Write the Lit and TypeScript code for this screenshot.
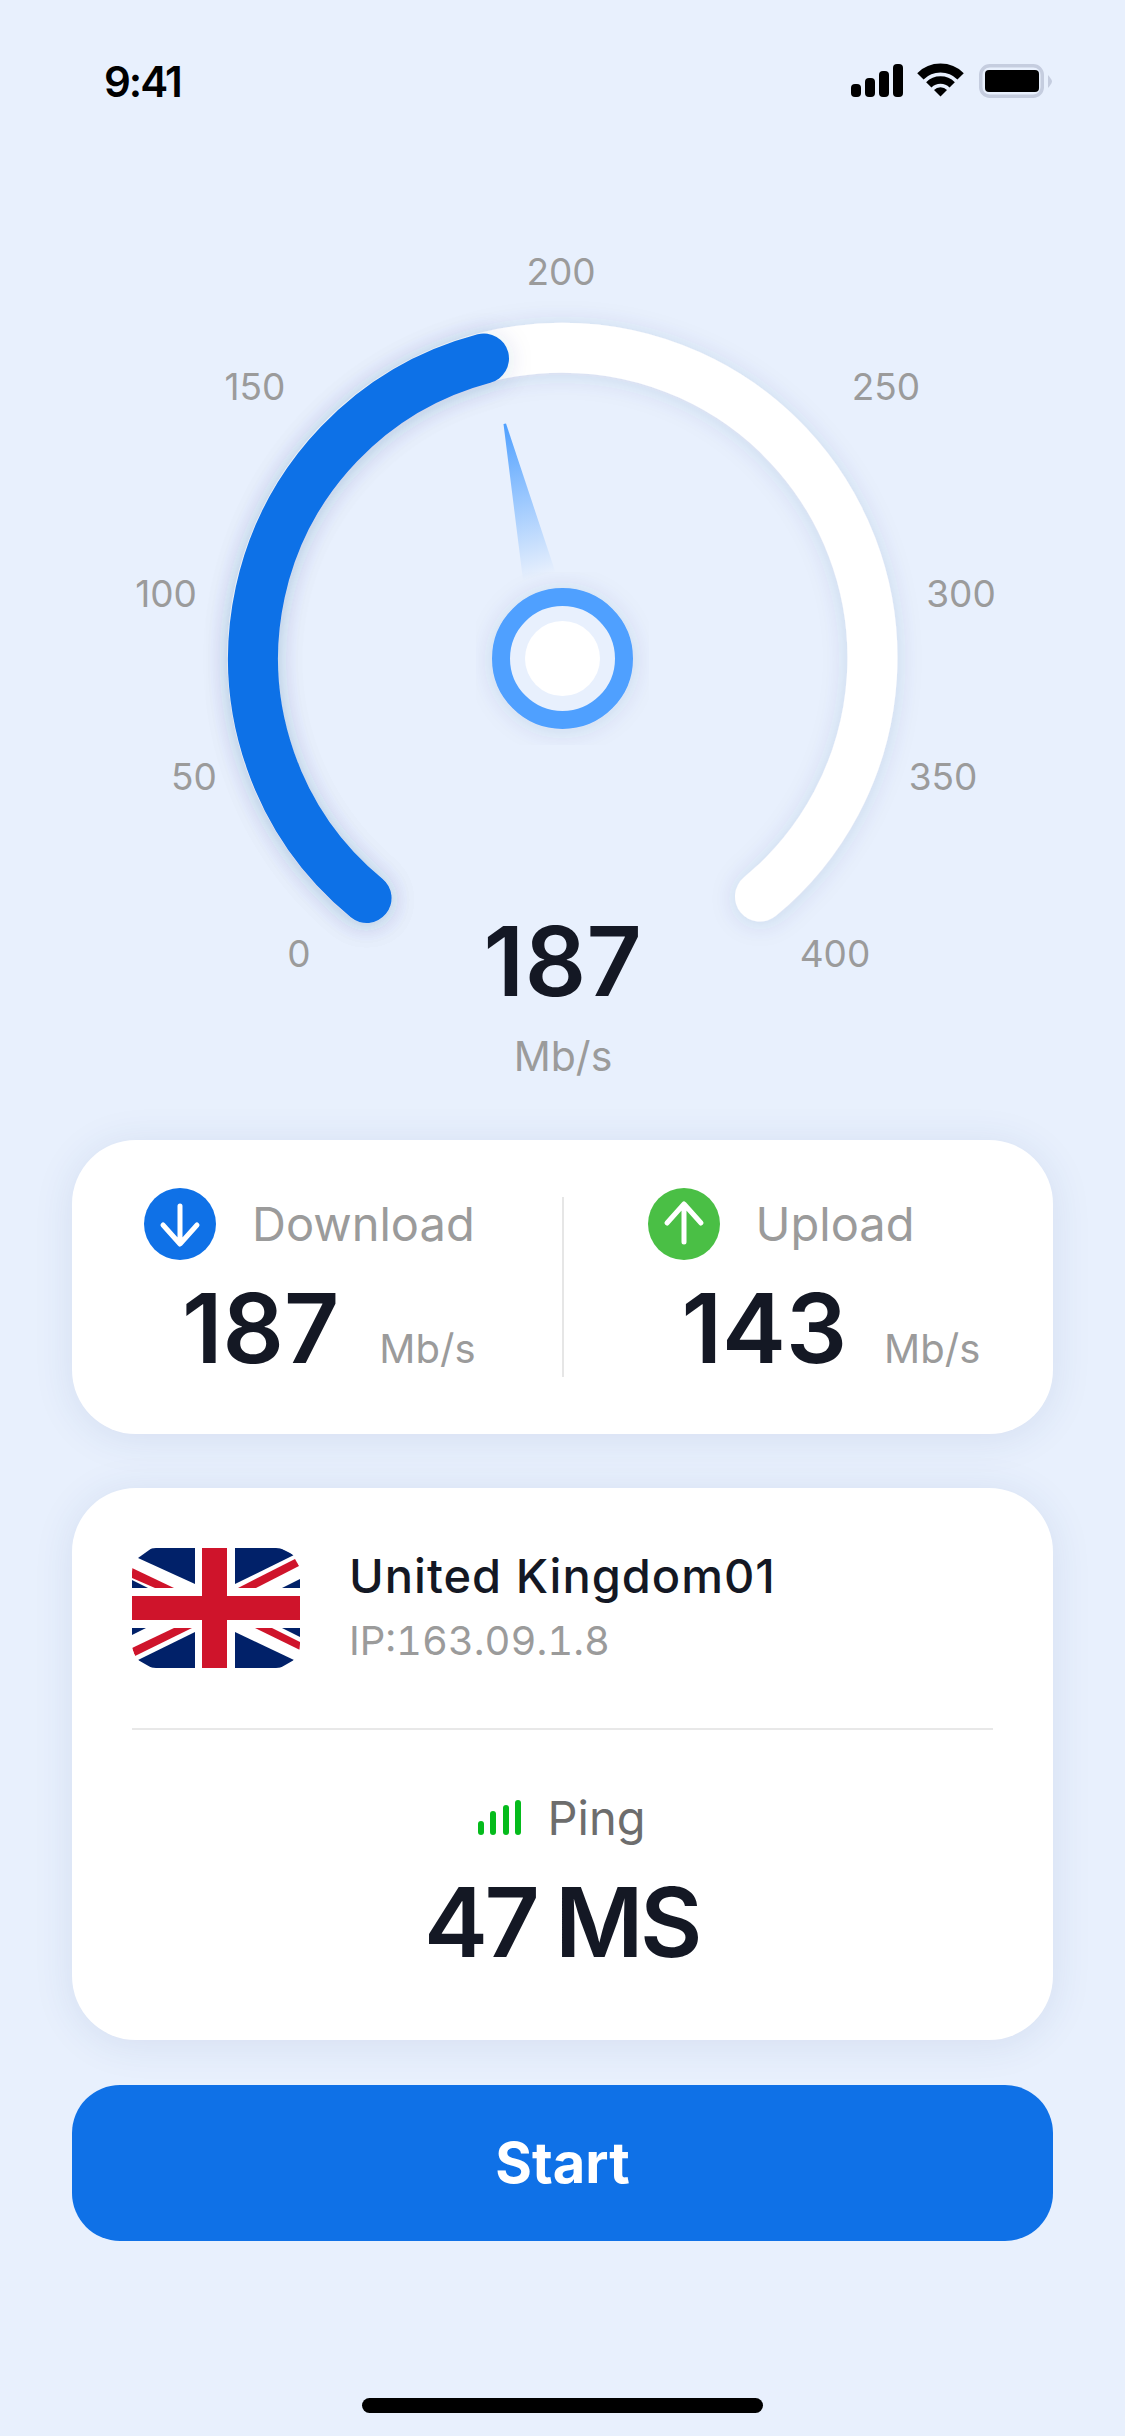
import { LitElement, html, css, svg } from "lit";
import { customElement } from "lit/decorators.js";

const LABELS: [string, number, number][] = [
  ["200", 561, 285], ["150", 255, 400], ["250", 886, 400], ["100", 166, 607], ["300", 961, 607],
  ["50", 194, 790], ["350", 943, 790], ["0", 299, 967], ["400", 835, 967],
];

@customElement("app-root")
export class AppRoot extends LitElement {
  static styles = css`
    :host {
      display: block;
      width: 1125px;
      height: 2436px;
      background: #e8f0fd;
      font-family: Inter, "Liberation Sans", sans-serif;
      color: #141824;
      overflow: hidden;
    }
    .page { display: flex; flex-direction: column; height: 2436px; }
    .status {
      height: 100px;
      flex: none;
      display: flex;
      justify-content: space-between;
      align-items: flex-start;
      padding: 57px 73px 0 104px;
      box-sizing: border-box;
    }
    .time { font-size: 42px; line-height: 50px; font-weight: 600; letter-spacing: -2px; color: #000; }
    .status-icons { display: flex; align-items: flex-start; margin-top: 7px; }
    .status-icons svg { display: block; }
    .gauge { display: block; flex: none; width: 1125px; height: 860px; margin-top: 140px; }
    .g-label { font-size: 37px; fill: #9b9b9b; text-anchor: middle; font-family: Inter, sans-serif; }
    .g-value { font-size: 96px; font-weight: 600; fill: #141824; text-anchor: middle; font-family: Inter, sans-serif; letter-spacing: 0.5px; }
    .g-unit { font-size: 41px; fill: #9b9b9b; text-anchor: middle; font-family: Inter, sans-serif; }
    .cards { display: flex; flex-direction: column; padding: 0 72px; margin-top: 40px; }
    .card { background: #fff; border-radius: 64px; box-shadow: 0 4px 40px rgba(40, 70, 130, 0.1); }
    .speed { height: 294px; display: grid; grid-template-columns: 1fr 2px 1fr; box-sizing: border-box; padding-top: 48px; }
    .sep { background: #e6e6e6; height: 180px; margin-top: 9px; }
    .col { display: flex; flex-direction: column; }
    .col.dl { padding-left: 72px; }
    .col.ul { padding-left: 84px; }
    .head { display: flex; align-items: center; gap: 36px; height: 72px; }
    .head svg { display: block; flex: none; }
    .head span { font-size: 47px; line-height: 70px; color: #9b9b9b; }
    .vals { display: flex; align-items: baseline; margin-top: 13px; height: 110px; }
    .dl .vals { padding-left: 38px; gap: 40px; }
    .ul .vals { padding-left: 34px; gap: 37px; }
    .vals b { font-size: 96px; font-weight: 600; line-height: 110px; }
    .vals span { font-size: 40px; color: #9b9b9b; }
    .server { margin-top: 54px; height: 552px; padding: 60px 60px 0; box-sizing: border-box; }
    .loc { display: flex; align-items: center; gap: 49px; height: 120px; }
    .flag { display: block; flex: none; border-radius: 24px; }
    .loc-text { display: flex; flex-direction: column; margin-top: 4px; }
    .name { font-size: 47px; line-height: 56px; font-weight: 450; color: #141824; letter-spacing: 1px; }
    .ip { font-size: 40px; line-height: 62px; margin-top: 6px; color: #9b9b9b; font-feature-settings: "tnum"; }
    .rule { height: 2px; background: #e8e8e8; margin-top: 60px; }
    .ping { display: flex; flex-direction: column; align-items: center; margin-top: 63px; }
    .ping-head { display: flex; align-items: center; gap: 27px; height: 48px; margin-left: -2px; }
    .ping-head svg { display: block; }
    .ping-head span { font-size: 47px; color: #6d6d6d; }
    .ping-val { font-size: 96px; font-weight: 600; line-height: 112px; letter-spacing: -3.5px; margin-top: 25px; word-spacing: -2px; margin-left: -2px; }
    .start {
      margin: 45px 72px 0;
      height: 156px;
      border-radius: 48px;
      background: #0f71e7;
      color: #fff;
      font-size: 56px;
      font-weight: 700;
      display: flex;
      align-items: center;
      justify-content: center;
    }
    .home-wrap { flex: 1; display: flex; align-items: flex-end; justify-content: center; padding-bottom: 23px; }
    .home { width: 401px; height: 15px; border-radius: 8px; background: #000; }
  `;

  private statusIcons() {
    return html`<div class="status-icons">
      <svg width="52" height="33" viewBox="0 0 52 33" fill="#000">
        <rect x="0" y="20" width="10" height="13" rx="4"></rect>
        <rect x="14" y="14" width="10" height="19" rx="4"></rect>
        <rect x="28" y="7" width="10" height="26" rx="4"></rect>
        <rect x="42" y="0" width="10" height="33" rx="4"></rect>
      </svg>
      <svg width="47" height="34" viewBox="0 0 47 34" style="margin:-1px 15px 0 14px" fill="none" stroke="#000">
        <path d="M3.4 13.4A28.5 28.5 0 0 1 43.6 13.4" stroke-width="9"></path>
        <path d="M11.8 21.8A16.5 16.5 0 0 1 35.2 21.8" stroke-width="7.5"></path>
        <path d="M23.5 33.5L17 27A9 9 0 0 1 30 27Z" fill="#000" stroke="none"></path>
      </svg>
      <svg width="73" height="34" viewBox="0 0 73 34">
        <rect x="1.75" y="1.75" width="61.5" height="30.5" rx="9" fill="none" stroke="#c5cddf" stroke-width="3.5"></rect>
        <rect x="6" y="6" width="54" height="22" rx="4" fill="#000"></rect>
        <path d="M69 11L71 13.5Q73 16 73 17.5Q73 19 71 21.5L69 24Z" fill="#c5cddf"></path>
      </svg>
    </div>`;
  }

  private gauge() {
    return html`<svg class="gauge" viewBox="0 240 1125 860" width="1125" height="860">
      <defs>
        <filter id="soft" x="-20%" y="-20%" width="140%" height="140%">
          <feDropShadow dx="0" dy="2" stdDeviation="12" flood-color="#28467f" flood-opacity="0.14"></feDropShadow>
        </filter>
        <linearGradient id="needle" gradientUnits="userSpaceOnUse" x1="505" y1="424" x2="545" y2="575">
          <stop offset="0" stop-color="#4fa0ff"></stop>
          <stop offset="1" stop-color="#4fa0ff" stop-opacity="0"></stop>
        </linearGradient>
      </defs>
      <path d="M366.6 898A310 310 0 1 1 760 896.6" fill="none" stroke="#fff"
        stroke-width="50" stroke-linecap="round" filter="url(#soft)"></path>
      <path d="M366.6 898A310 310 0 0 1 484 358.5" fill="none" stroke="#0f71e7" stroke-width="50" stroke-linecap="round" filter="url(#soft)"></path>
      <polygon points="503.5,424 506,423.5 558,580 524,588" fill="url(#needle)"></polygon>
      <circle cx="562.5" cy="658.5" r="61.5" fill="#e8f0fd" stroke="#4fa0ff" stroke-width="18" filter="url(#soft)"></circle>
      <circle cx="562.5" cy="658.5" r="37.5" fill="#fff"></circle>
      ${LABELS.map(([t, x, y]) => svg`<text class="g-label" x="${x}" y="${y}">${t}</text>`)}
      <text class="g-value" x="563" y="996">187</text>
      <text class="g-unit" x="563" y="1071">Mb/s</text>
    </svg>`;
  }

  private flag() {
    return html`<svg class="flag" width="168" height="120" viewBox="0 0 168 120">
      <rect width="168" height="120" fill="#fff"></rect>
      <g fill="#012169">
        <polygon points="6,10 20,0 63,0 63,36"></polygon>
        <polygon points="0,32 0,40 16,40"></polygon>
        <polygon points="103,0 148,0 162,7 103,36"></polygon>
        <polygon points="168,31 168,40 150,40"></polygon>
        <polygon points="0,80 14,80 0,87"></polygon>
        <polygon points="63,84 63,120 20,120 6,112"></polygon>
        <polygon points="103,84 162,112 148,120 103,120"></polygon>
        <polygon points="150,80 168,80 168,89"></polygon>
      </g>
      <g fill="#cf142b">
        <polygon points="0,20 42,40 23,40 0,30"></polygon>
        <polygon points="106,40 163,11 167,18 124,40"></polygon>
        <polygon points="42,80 60,80 3,108 0,100"></polygon>
        <polygon points="123,80 140,80 168,94 168,102"></polygon>
        <rect x="70" y="0" width="25" height="120"></rect>
        <rect x="0" y="48" width="168" height="24"></rect>
      </g>
    </svg>`;
  }

  render() {
    return html`<div class="page">
      <div class="status"><span class="time">9:41</span>${this.statusIcons()}</div>
      ${this.gauge()}
      <div class="cards">
        <div class="card speed">
          <div class="col dl">
            <div class="head">
              <svg width="72" height="72" viewBox="0 0 72 72">
                <circle cx="36" cy="36" r="36" fill="#0f71e7"></circle>
                <path d="M36 18V55M19 37L36 56L53 37" fill="none" stroke="#fff" stroke-width="5" stroke-linecap="round" stroke-linejoin="round"></path>
              </svg>
              <span>Download</span>
            </div>
            <div class="vals"><b>187</b><span>Mb/s</span></div>
          </div>
          <div class="sep"></div>
          <div class="col ul">
            <div class="head">
              <svg width="72" height="72" viewBox="0 0 72 72">
                <circle cx="36" cy="36" r="36" fill="#4abf45"></circle>
                <path d="M36 54V17M19 35L36 16L53 35" fill="none" stroke="#fff" stroke-width="5" stroke-linecap="round" stroke-linejoin="round"></path>
              </svg>
              <span>Upload</span>
            </div>
            <div class="vals"><b>143</b><span>Mb/s</span></div>
          </div>
        </div>
        <div class="card server">
          <div class="loc">
            ${this.flag()}
            <div class="loc-text">
              <span class="name">United Kingdom01</span>
              <span class="ip">IP:163.09.1.8</span>
            </div>
          </div>
          <div class="rule"></div>
          <div class="ping">
            <div class="ping-head">
              <svg width="43" height="35" viewBox="0 0 43 35" fill="#05bb1c">
                <rect x="0" y="21" width="6" height="14" rx="3"></rect>
                <rect x="12" y="11" width="6" height="24" rx="3"></rect>
                <rect x="25" y="5" width="6" height="30" rx="3"></rect>
                <rect x="37" y="0" width="6" height="35" rx="3"></rect>
              </svg>
              <span>Ping</span>
            </div>
            <div class="ping-val">47 MS</div>
          </div>
        </div>
      </div>
      <div class="start">Start</div>
      <div class="home-wrap"><div class="home"></div></div>
    </div>`;
  }
}
